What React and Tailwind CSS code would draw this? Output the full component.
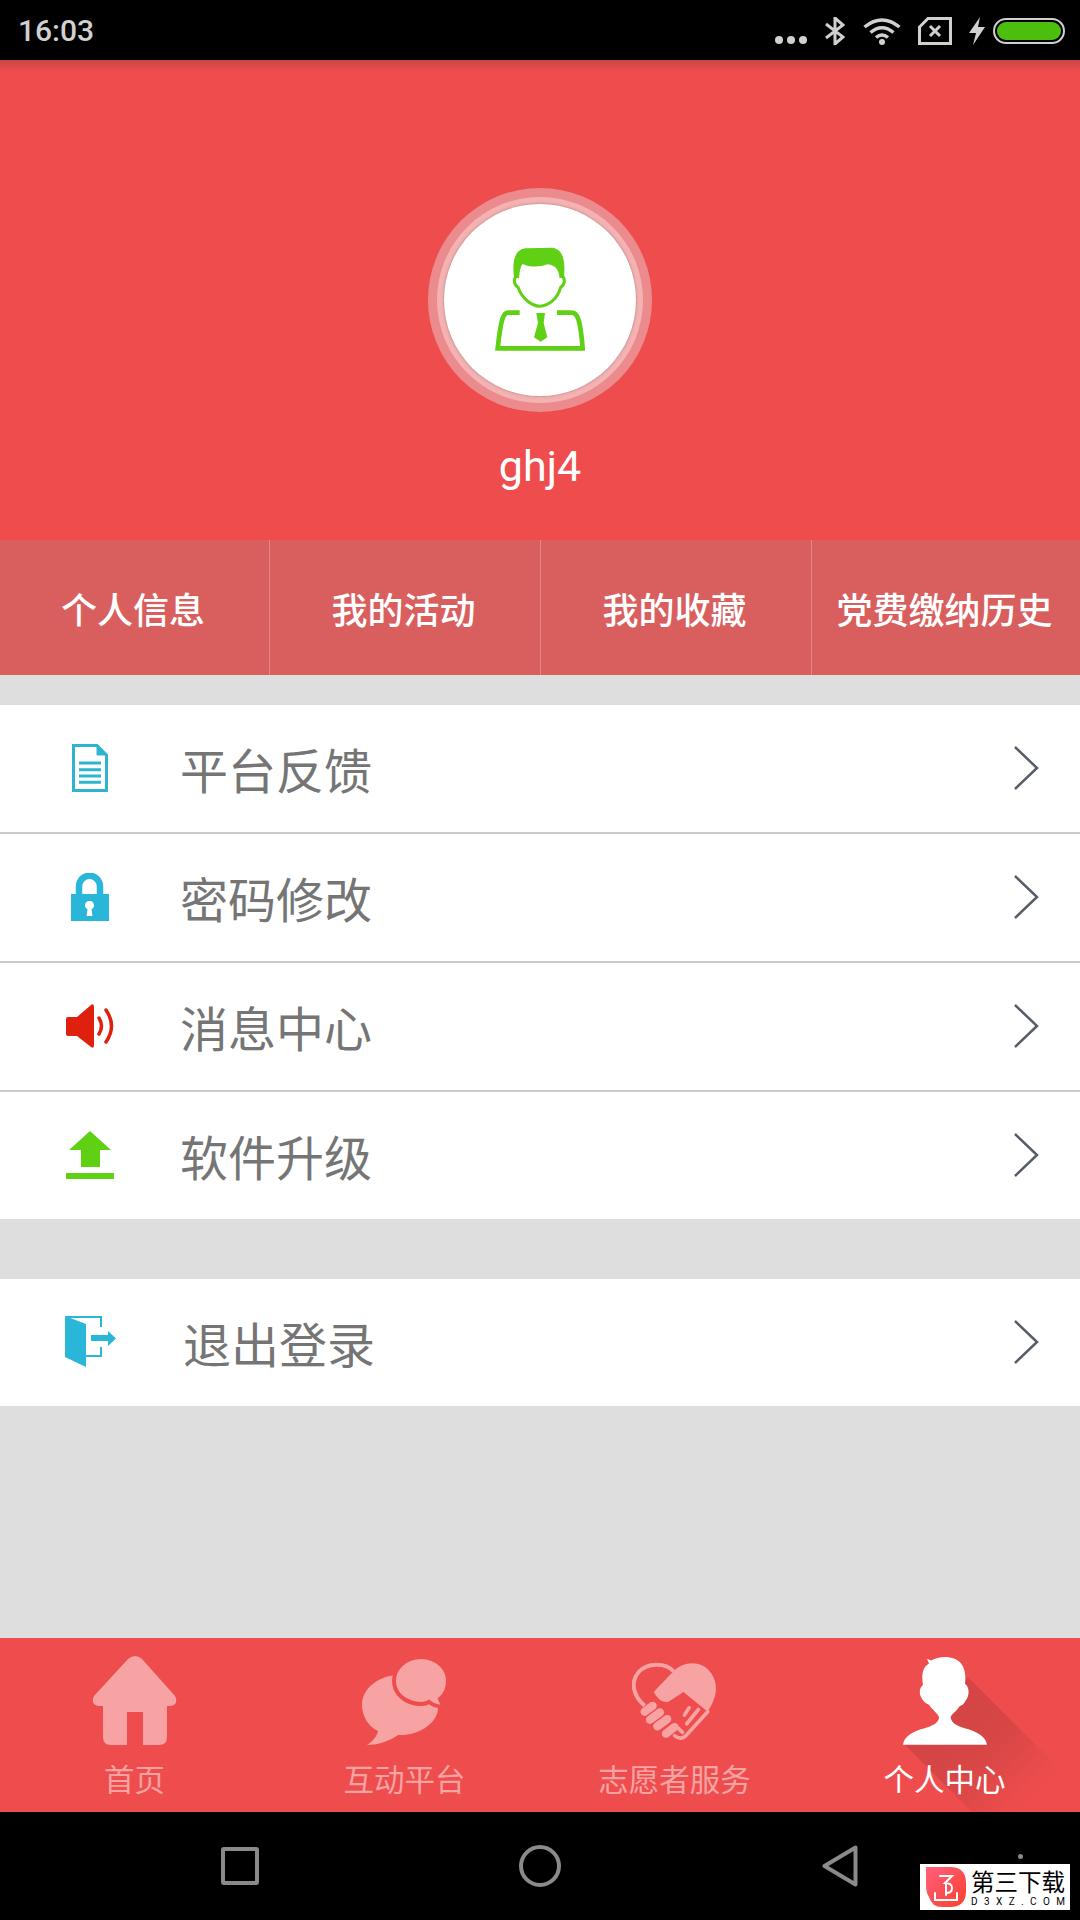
const TABS = ['个人信息', '我的活动', '我的收藏', '党费缴纳历史']

const DocIcon = () => (
  <svg width="36" height="48" viewBox="0 0 36 48" fill="none" stroke="#2fb4d0">
    <path d="M1.5 1.5H25L34.5 11V46.5H1.5Z" strokeWidth="3" />
    <path d="M25 2V11H34Z" fill="#2fb4d0" strokeWidth="1" />
    <path d="M7 19H29M7 25.7H29M7 32H29M7 38.3H29" strokeWidth="3" />
  </svg>
)

const LockIcon = () => (
  <svg width="38" height="48" viewBox="0 0 38 48">
    <path d="M8 24V14C8 -1 29 -1 29 14V24" fill="none" stroke="#29b6d8" strokeWidth="6.5" />
    <path fillRule="evenodd" fill="#29b6d8" d="M0 21H38V48H0ZM18.5 28A4.2 4.2 0 0 0 16.5 36L15.5 43H21.5L20.5 36A4.2 4.2 0 0 0 18.5 28Z" />
  </svg>
)

const SpeakerIcon = () => (
  <svg width="48" height="44" viewBox="0 0 48 44">
    <path fill="#e0200f" d="M2 13H11L25 1Q28 -1 28 3V41Q28 45 25 43L11 32H2Q0 32 0 30V15Q0 13 2 13Z" />
    <path d="M33 14Q38 22 33 30" fill="none" stroke="#e0200f" strokeWidth="3.5" strokeLinecap="round" />
    <path d="M40 6Q51 22 40 38" fill="none" stroke="#e0200f" strokeWidth="3.5" strokeLinecap="round" />
  </svg>
)

const UploadIcon = () => (
  <svg width="48" height="48" viewBox="0 0 48 48" fill="#5fd013">
    <path d="M24 0L45 19H34V36H15V19H3Z" />
    <rect x="0" y="42" width="48" height="6" />
  </svg>
)

const DoorIcon = () => (
  <svg width="51" height="51" viewBox="0 0 51 51">
    <path fill="#29b6d8" d="M0 0L21 8V51L0 41Z" />
    <path d="M1 1H36V11M36 31V40H21" fill="none" stroke="#29b6d8" strokeWidth="2" />
    <path fill="#29b6d8" d="M26 19H43V15L51 22.5L43 30V25H26Z" />
  </svg>
)

const Chevron = () => (
  <svg width="26" height="46" viewBox="0 0 26 46" fill="none">
    <path d="M2 2L24 23L2 44" stroke="#565c68" strokeWidth="2.5" />
  </svg>
)

const ROWS = [
  { label: '平台反馈', icon: <DocIcon /> },
  { label: '密码修改', icon: <LockIcon /> },
  { label: '消息中心', icon: <SpeakerIcon /> },
  { label: '软件升级', icon: <UploadIcon /> },
]

const HomeIcon = () => (
  <svg width="85" height="90" viewBox="0 0 85 90" fill="#f7a3a3">
    <path d="M36 4Q43 -2 50 4L83 41Q87 50 78 51H75V82Q75 90 67 90H51V57H35V90H19Q11 90 11 82V51H7Q-2 50 2 41Z" />
  </svg>
)

const ChatIcon = () => (
  <svg width="85" height="87" viewBox="0 0 85 87">
    <path fill="#f7a3a3" d="M38 17C60 17 76 32 76 50C76 64 58 78 36 77C26 84 14 87 5 87C12 82 15 78 16 73C6 68 0 58 0 47C0 30 17 17 38 17Z" />
    <path fill="#f7a3a3" stroke="#ef4d4d" strokeWidth="4" d="M59 -1C74 -1 86 10 86 23C86 31 83 37 78 41C79 44 81 47 83 49C76 49 71 47 67 44C64 46 61 46 59 46C44 46 32 36 32 23C32 10 44 -1 59 -1Z" />
  </svg>
)

const HeartIcon = () => (
  <svg width="85" height="83" viewBox="40 40 256 250" fill="none" stroke="#f7a3a3">
    <path d="M165 68C140 40 85 42 60 70C35 100 42 140 78 172" strokeWidth="12" />
    <path fill="#f7a3a3" stroke="none" d="M105 130L165 68C200 32 262 35 285 85C305 130 282 165 268 190L195 130L150 160Q125 165 105 130Z" />
    <g strokeWidth="25" strokeLinecap="round">
      <path d="M102 172L78 190" />
      <path d="M124 192L94 214" />
      <path d="M146 212L116 234" />
      <path d="M168 236L142 256" />
    </g>
    <path d="M268 190L200 264Q185 276 168 262" strokeWidth="11" strokeLinecap="round" />
    <path d="M240 183L205 226M212 178L198 200M180 240L192 252" strokeWidth="11" strokeLinecap="round" />
  </svg>
)

const PersonIcon = () => (
  <svg width="84" height="88" viewBox="40 35 252 263" fill="#fff">
    <path d="M112 40L125 45C150 30 195 30 215 55C228 72 228 95 226 115C240 125 240 150 228 165C222 178 215 180 210 182C200 198 185 205 183 215C185 232 200 240 225 248C265 258 290 275 292 298H40C42 275 65 258 105 248C130 240 147 232 148 215C145 205 125 190 118 178C105 172 98 165 92 150C88 135 92 125 100 118C95 90 98 65 118 55Z" />
  </svg>
)

const NAV = [
  { label: '首页', icon: <HomeIcon /> },
  { label: '互动平台', icon: <ChatIcon /> },
  { label: '志愿者服务', icon: <HeartIcon /> },
  { label: '个人中心', icon: <PersonIcon />, active: true },
]

function Row({ label, icon, className = '', labelClass = '' }) {
  return (
    <div className={`flex items-center bg-white pb-[2px] ${className}`}>
      <div className="w-[180px] flex justify-center shrink-0">{icon}</div>
      <span className={`flex-1 text-[48px] leading-none text-[#757575] ${labelClass}`}>{label}</span>
      <div className="pr-[41px] flex"><Chevron /></div>
    </div>
  )
}

export default function App() {
  return (
    <div className="w-[1080px] h-[1920px] flex flex-col bg-[#dedede] font-['Noto_Sans_CJK_SC',sans-serif] overflow-hidden">
      {/* status bar */}
      <div className="h-[60px] bg-black flex items-center justify-between pl-[18px] pr-[15px] shrink-0">
        <span className="pt-[2px] text-[30px] font-medium leading-none text-[#d0d0d0] font-['Roboto',sans-serif]">16:03</span>
        <div className="flex items-center h-full pt-[1px]">
          <div className="flex gap-[4px] mt-[18px] mr-[18px]">
            <span className="w-[8px] h-[8px] rounded-full bg-[#d0d0d0]" />
            <span className="w-[8px] h-[8px] rounded-full bg-[#d0d0d0]" />
            <span className="w-[8px] h-[8px] rounded-full bg-[#d0d0d0]" />
          </div>
          <svg width="20" height="28" viewBox="0 0 20 28" fill="none" stroke="#d0d0d0" strokeWidth="3" className="mr-[18px]">
            <path d="M1 7L18 20L10 27V1L18 8L1 21" />
          </svg>
          <svg width="38" height="28" viewBox="0 0 38 28" fill="none" stroke="#d0d0d0" strokeWidth="3.5" className="mr-[17px]">
            <path d="M1.5 10Q19 -4 36.5 10" />
            <path d="M7.5 15.5Q19 6 30.5 15.5" />
            <path d="M13 20.5Q19 15.5 25 20.5" />
            <circle cx="19" cy="25" r="3" fill="#d0d0d0" stroke="none" />
          </svg>
          <svg width="34" height="28" viewBox="0 0 34 28" fill="none" stroke="#d0d0d0" strokeWidth="3" className="mr-[17px]">
            <path d="M10 1.5H32.5V26.5H1.5V10Z" />
            <path d="M12 9L22 19M22 9L12 19" />
          </svg>
          <svg width="16" height="28" viewBox="0 0 16 28" fill="#d0d0d0" className="mr-[8px]">
            <path d="M11 0L0 16H7L4 28L16 10H9Z" />
          </svg>
          <div className="w-[72px] h-[26px] rounded-full border-[2px] border-[#d0d0d0] bg-black p-[2px]">
            <div className="w-full h-full rounded-full bg-[#4cbf0e]" />
          </div>
        </div>
      </div>

      {/* header */}
      <div className="h-[480px] bg-[#ef4d4d] flex flex-col items-center shrink-0">
        <div className="w-full h-[12px] bg-gradient-to-b from-[#c94545] to-[#ef4d4d]" />
        <div className="mt-[116px] w-[224px] h-[224px] rounded-full bg-[#ec8b8d] flex items-center justify-center">
          <div className="w-[206px] h-[206px] rounded-full bg-[#f4b3b3] flex items-center justify-center">
            <div className="w-[192px] h-[192px] rounded-full bg-white flex items-center justify-center shadow-[0_0_3px_rgba(120,60,60,0.5)]">
              <svg width="90" height="104" viewBox="288 235 270 310" className="mt-[-2px]">
                <path fill="#5fd013" d="M345 325C338 270 350 238 385 238L460 236C490 240 500 270 495 325L482 328C480 305 472 288 445 286C420 296 390 294 370 285C362 300 362 310 360 328Z" />
                <path fill="none" stroke="#5fd013" strokeWidth="9" d="M360 320C342 320 342 345 357 355C370 392 400 410 422 412C450 410 475 390 485 355C500 345 500 320 482 320" />
                <path fill="none" stroke="#5fd013" strokeWidth="14" d="M362 431H328C312 431 306 450 296 538H551C544 450 535 431 518 431H474" />
                <path fill="#5fd013" d="M412 432H438L434 462L445 505L425 518L405 505L417 462Z" />
              </svg>
            </div>
          </div>
        </div>
        <div className="mt-[29px] text-[43px] leading-[50px] text-white font-['Roboto',sans-serif]">ghj4</div>
      </div>

      {/* tabs */}
      <div className="h-[135px] bg-[#d95f5f] grid grid-cols-[270px_271px_271px_268px] shrink-0">
        {TABS.map((t, i) => (
          <div key={t} className={`flex items-center justify-center pr-[3px] text-[36px] leading-none font-medium text-white ${i < 3 ? 'border-r border-white/25' : ''}`}>
            {t}
          </div>
        ))}
      </div>

      <div className="mt-[30px] flex flex-col shrink-0">
        {ROWS.map((r, i) => (
          <Row key={r.label} label={r.label} icon={r.icon} className={i < 3 ? 'h-[129px] border-b-2 border-[#cbcbcb]' : 'h-[127px]'} />
        ))}
      </div>

      <Row label="退出登录" icon={<DoorIcon />} className="mt-[60px] h-[127px] shrink-0" labelClass="pl-[3px]" />

      <div className="flex-1" />

      {/* bottom nav */}
      <div className="relative h-[174px] bg-[#ef4d4d] grid grid-cols-4 shrink-0 overflow-hidden">
        <svg className="absolute left-[810px] top-0" width="270" height="174" viewBox="810 1638 270 174">
          <defs>
            <linearGradient id="longShadow" gradientUnits="userSpaceOnUse" x1="905" y1="1745" x2="996" y2="1836">
              <stop offset="0" stopColor="#000" stopOpacity="0.11" />
              <stop offset="0.45" stopColor="#000" stopOpacity="0.1" />
              <stop offset="1" stopColor="#000" stopOpacity="0" />
            </linearGradient>
          </defs>
          <path fill="url(#longShadow)" d="M968 1677L1062 1771L1021 1812H972L905 1745H945V1700Z" />
        </svg>
        {NAV.map(n => (
          <div key={n.label} className="relative flex flex-col items-center pt-[17px] pr-[1px]">
            <div className="h-[90px] flex items-end">{n.icon}</div>
            <span className={`mt-[15px] text-[30.5px] leading-[36px] ${n.active ? 'text-white' : 'text-[#f7a3a3]'}`}>{n.label}</span>
          </div>
        ))}
      </div>

      {/* android nav */}
      <div className="relative h-[108px] bg-black grid grid-cols-3 px-[90px] shrink-0">
        <div className="flex items-center justify-center">
          <div className="w-[38px] h-[38px] rounded-[3px] border-[4px] border-[#8a8a8a]" />
        </div>
        <div className="flex items-center justify-center">
          <div className="w-[42px] h-[42px] rounded-full border-[4px] border-[#8a8a8a]" />
        </div>
        <div className="flex items-center justify-center">
          <svg width="36" height="42" viewBox="0 0 36 42" fill="none">
            <path d="M33.5 2.5V39.5L2.5 21Z" stroke="#8a8a8a" strokeWidth="4" strokeLinejoin="round" />
          </svg>
        </div>
        <span className="absolute left-[1018px] top-[42px] w-[5px] h-[5px] rounded-full bg-[#8a8a8a]" />

        {/* watermark */}
        <div className="absolute left-[920px] top-[52px] w-[150px] h-[46px] bg-white flex items-center pl-[6px]">
          <svg width="40" height="40" viewBox="0 0 40 40" className="shrink-0">
            <defs>
              <linearGradient id="wm" x1="0" y1="0" x2="1" y2="1">
                <stop offset="0" stopColor="#ff5f7e" />
                <stop offset="1" stopColor="#f9412e" />
              </linearGradient>
            </defs>
            <path fill="url(#wm)" d="M0 0H24Q40 0 40 16V24Q40 40 24 40H16Q6 40 3 30Q0 26 0 16Z" />
            <path d="M14 9H26L19 16Q26 16 26 21Q26 26 20 26M20 17V28M9 26V33H31V26" fill="none" stroke="#fff" strokeWidth="2" strokeLinecap="round" />
          </svg>
          <div className="ml-[5px] flex flex-col items-start text-black">
            <span className="text-[23.5px] leading-[26px]">第三下载</span>
            <span className="mt-[2px] text-[10px] leading-[11px] tracking-[6.4px] font-['Roboto',sans-serif]">D3XZ.COM</span>
          </div>
        </div>
      </div>
    </div>
  )
}
